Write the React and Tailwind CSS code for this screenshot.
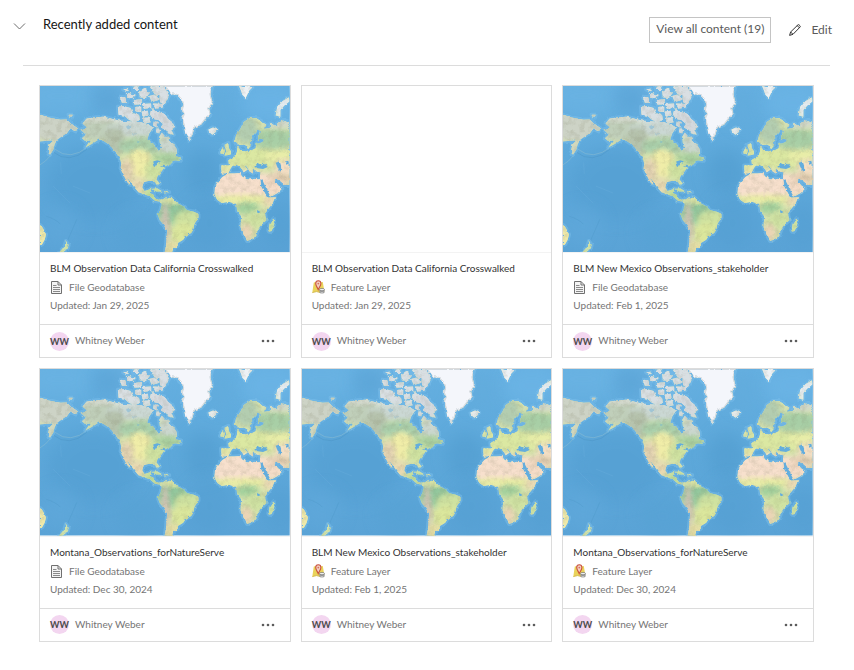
import React, { useState } from 'react';

const ITEMS = [
    { id: 1, title: 'BLM Observation Data California Crosswalked', type: 'File Geodatabase', updated: 'Jan 29, 2025', owner: 'Whitney Weber', hasThumbnail: true },
    { id: 2, title: 'BLM Observation Data California Crosswalked', type: 'Feature Layer', updated: 'Jan 29, 2025', owner: 'Whitney Weber', hasThumbnail: false },
    { id: 3, title: 'BLM New Mexico Observations_stakeholder', type: 'File Geodatabase', updated: 'Feb 1, 2025', owner: 'Whitney Weber', hasThumbnail: true },
    { id: 4, title: 'Montana_Observations_forNatureServe', type: 'File Geodatabase', updated: 'Dec 30, 2024', owner: 'Whitney Weber', hasThumbnail: true },
    { id: 5, title: 'BLM New Mexico Observations_stakeholder', type: 'Feature Layer', updated: 'Feb 1, 2025', owner: 'Whitney Weber', hasThumbnail: true },
    { id: 6, title: 'Montana_Observations_forNatureServe', type: 'Feature Layer', updated: 'Dec 30, 2024', owner: 'Whitney Weber', hasThumbnail: true },
];

const TOTAL = 19;

const NORTH_AMERICA = 'M128 112L140 98L162 94L190 92L215 98L240 104L270 106L300 108L322 114L340 124L328 142L322 160L340 172L352 188L358 196L364 186L360 170L358 152L366 140L384 160L400 172L410 188L412 202L406 210L424 214L420 224L404 222L394 232L376 240L366 254L353 270L350 280L360 292L352 298L342 284L326 284L312 288L307 303L314 314L328 310L334 306L330 320L342 326L346 336L358 340L368 338L364 346L346 344L330 330L312 324L296 318L284 304L270 284L262 274L272 296L262 288L250 264L242 248L244 232L240 218L228 200L216 184L203 172L190 164L176 160L164 168L152 176L136 184L144 172L150 164L134 164L126 156L138 146L130 138L122 130L142 124Z';
const SOUTH_AMERICA = 'M362 344L378 333L398 336L412 350L430 360L442 372L462 376L476 382L476 394L464 412L460 430L454 440L438 448L430 460L414 470L414 478L400 486L396 500L374 500L378 480L380 458L382 432L370 414L360 402L354 386L362 370L366 356Z';
const GREENLAND = 'M374 0L384 12L392 24L410 26L424 40L430 56L426 72L432 84L426 98L432 116L436 140L448 162L458 146L464 124L484 116L498 98L512 84L508 68L518 50L512 24L518 0Z';
const AFRICA = 'M548 272L566 262L584 262L602 260L606 270L622 280L632 276L646 278L662 280L664 300L674 318L684 334L706 333L698 352L684 370L676 384L680 402L664 416L656 428L650 446L640 458L622 464L612 446L602 422L604 390L592 374L590 354L568 346L546 350L532 340L524 324L526 304L532 290Z';
const EURASIA = 'M546 262L544 238L568 238L566 222L582 212L590 202L596 182L602 194L616 196L636 192L652 184L650 174L668 168L674 160L660 158L654 162L656 150L664 136L654 130L642 144L634 160L634 176L624 188L616 176L606 176L592 174L584 166L588 150L602 128L612 108L630 96L648 96L664 104L680 116L676 128L690 126L692 112L706 118L718 108L734 102L750 108L750 296L736 296L722 284L708 276L704 284L716 298L728 306L714 320L692 332L684 320L672 300L660 284L662 258L648 256L640 246L640 262L630 256L620 240L612 236L624 250L612 258L602 240L588 236L574 244L566 260Z';
const SIBERIA = 'M0 84L16 92L33 96L62 101L80 100L90 110L112 126L108 136L90 128L82 140L66 150L52 160L44 174L40 190L30 206L24 194L28 176L40 162L20 164L0 166Z';
const BAFFIN = 'M336 66L348 76L360 80L374 82L384 98L396 108L404 124L394 130L402 146L386 142L378 130L362 124L370 114L356 102L338 98L330 84Z';
const ARCTIC = 'M234 62L250 60L272 66L280 82L262 90L236 86ZM240 32L256 34L262 50L246 50ZM262 20L284 26L282 38L262 36ZM282 42L304 40L306 54L284 56ZM254 90L272 84L284 82L298 88L300 102L286 108L268 102ZM298 16L314 6L330 20L318 36L300 34ZM308 54L334 52L334 66L312 68ZM286 62L304 62L304 78L288 76ZM306 76L324 74L326 88L308 92ZM328 30L350 24L356 42L336 48ZM330 2L370 0L380 14L388 30L374 52L358 48L360 28L344 24ZM342 52L370 54L368 64L346 68ZM306 96L326 94L334 108L314 112ZM342 106L356 108L352 124L340 118ZM350 130L360 132L358 142L350 140ZM380 150L392 156L388 164ZM278 2L296 0L294 12L280 12ZM250 10L264 8L262 16Z';
const ISLANDS = 'M506 130L520 124L532 130L528 138L518 146L508 138ZM598 0L612 4L618 0L638 4L628 14L618 36L608 26L604 14ZM542 192L552 184L556 194L552 204L542 202ZM554 176L566 170L568 186L574 196L572 206L554 208L560 198ZM686 432L690 412L702 396L704 412L696 434L688 436ZM334 308L352 306L368 316L350 316ZM372 314L388 318L376 322ZM0 416L8 424L18 444L14 460L6 474L0 476ZM78 464L86 476L82 488L70 490ZM56 500L70 484L78 490L66 500ZM86 86L98 86L96 94L88 94Z';
const NOVAYA_ZEMLYA = 'M708 88L712 66L728 46L748 34L750 46L734 58L722 72L722 92Z';

const LAND = [NORTH_AMERICA, SOUTH_AMERICA, AFRICA, EURASIA, SIBERIA, BAFFIN, ARCTIC, ISLANDS, GREENLAND, NOVAYA_ZEMLYA].join('');

// cx, cy, rx, ry, color of the soft terrain tints clipped to the land
const TERRAIN = [
    [60, 120, 100, 50, '#cdd3c6'],
    [34, 190, 18, 30, '#d3d8c0'],
    [170, 125, 60, 40, '#c0cfba'],
    [170, 96, 60, 10, '#d8dbd2'],
    [310, 50, 130, 75, '#d9dfe3'],
    [290, 130, 90, 26, '#cbd8d4'],
    [224, 165, 34, 42, '#b6c3ad'],
    [306, 180, 70, 26, '#a9cfab'],
    [392, 180, 40, 28, '#cbd7cf'],
    [380, 220, 50, 20, '#a9d0a0'],
    [300, 232, 38, 44, '#f0eda8'],
    [346, 250, 30, 30, '#cfe2a0'],
    [260, 258, 22, 42, '#e4d3b2'],
    [294, 298, 24, 24, '#e9d9b2'],
    [340, 325, 28, 18, '#bddb9a'],
    [378, 104, 36, 50, '#d4d9de'],
    [404, 378, 60, 34, '#93c79d'],
    [446, 402, 44, 30, '#cfe2a0'],
    [400, 342, 34, 10, '#dde5a4'],
    [434, 444, 40, 34, '#dbe79c'],
    [376, 424, 12, 76, '#d0c2b4'],
    [400, 486, 24, 24, '#e6dfa6'],
    [600, 296, 100, 48, '#f7e0cd'],
    [610, 340, 94, 14, '#e9eda4'],
    [624, 366, 34, 18, '#a2d09c'],
    [650, 400, 34, 26, '#cfe2a2'],
    [620, 438, 18, 26, '#ebd4b6'],
    [690, 344, 20, 16, '#eedbb8'],
    [700, 296, 42, 34, '#f6ddc8'],
    [640, 216, 110, 32, '#dbe8a2'],
    [720, 210, 44, 20, '#e8eda8'],
    [700, 158, 70, 30, '#a8cfa6'],
    [620, 130, 34, 42, '#b3cdb0'],
    [720, 112, 44, 14, '#d2d8cd'],
    [738, 246, 34, 26, '#f5e0c6'],
    [726, 276, 36, 14, '#e2ccb0'],
    [560, 248, 22, 12, '#e6e8a6'],
    [520, 134, 24, 18, '#e8ecee'],
    [618, 14, 30, 34, '#eef2f6'],
    [730, 62, 30, 36, '#e4ebf0'],
    [695, 415, 14, 26, '#cbe0a0'],
    [4, 446, 24, 40, '#efe9aa'],
    [74, 484, 24, 24, '#cfe2a8'],
];

const DEPTHS = [
    [60, 30, 110, 60, '#6ab3e3', 0.7],
    [280, 30, 90, 70, '#6ab1e1', 0.7],
    [205, 40, 50, 44, '#5aa3d5', 0.7],
    [160, 290, 140, 110, '#539ed1', 0.6],
    [490, 260, 56, 70, '#519ccf', 0.6],
    [510, 410, 70, 80, '#539ed1', 0.5],
    [60, 420, 60, 60, '#60a9db', 0.6],
    [690, 50, 90, 60, '#6bb4e5', 0.9],
    [540, 60, 40, 60, '#62abdc', 0.6],
    [720, 420, 50, 70, '#539ed1', 0.5],
    [300, 440, 70, 60, '#57a2d4', 0.6],
];

function WorldMap() {
    return (
        <svg viewBox="0 0 750 498" preserveAspectRatio="none" className="block h-full w-full" aria-hidden="true">
            <defs>
                <clipPath id="land"><path d={LAND} /></clipPath>
                <linearGradient id="ocean" x1="0" y1="0" x2="0" y2="1">
                    <stop offset="0" stopColor="#65afe0" />
                    <stop offset=".5" stopColor="#5da8da" />
                    <stop offset="1" stopColor="#5aa3d6" />
                </linearGradient>
                <filter id="soft" x="-30%" y="-30%" width="160%" height="160%"><feGaussianBlur stdDeviation="8" /></filter>
                <filter id="deep" x="-50%" y="-50%" width="200%" height="200%"><feGaussianBlur stdDeviation="24" /></filter>
                <filter id="coast" x="0" y="0" width="100%" height="100%" colorInterpolationFilters="sRGB">
                    <feTurbulence type="fractalNoise" baseFrequency="0.09" numOctaves="3" seed="4" result="n" />
                    <feDisplacementMap in="SourceGraphic" in2="n" scale="9" xChannelSelector="R" yChannelSelector="G" />
                    <feGaussianBlur stdDeviation="1.2" />
                </filter>
                <filter id="relief" x="0" y="0" width="100%" height="100%" colorInterpolationFilters="sRGB">
                    <feTurbulence type="fractalNoise" baseFrequency="0.06" numOctaves="4" seed="9" />
                    <feColorMatrix values="0 0 0 0 0.5  0 0 0 0 0.5  0 0 0 0 0.4  2.4 0 0 0 -1" />
                </filter>
            </defs>
            <rect width="750" height="498" fill="url(#ocean)" />
            {DEPTHS.map(([cx, cy, rx, ry, fill, opacity], i) => (
                <ellipse key={i} cx={cx} cy={cy} rx={rx} ry={ry} fill={fill} opacity={opacity} filter="url(#deep)" />
            ))}
            <g fill="none" strokeWidth="2" strokeLinecap="round">
                <path d="M144 182Q90 226 46 190M30 210Q18 226 0 236" stroke="#8bbcd2" opacity=".8" />
                <path d="M140 190Q88 236 40 198" stroke="#468cbd" opacity=".5" />
                <path d="M110 400L84 460M20 390Q50 400 60 412" stroke="#4c95c7" opacity=".5" />
                <path d="M62 230L64 262M100 300L150 320M40 300L90 350" stroke="#74b5df" opacity=".35" />
            </g>
            <path d={LAND} fill="none" stroke="#7fc2ee" strokeWidth="12" strokeLinejoin="round" opacity=".45" filter="url(#coast)" />
            <g filter="url(#coast)">
                <rect width="750" height="498" fill="none" />
                <g clipPath="url(#land)">
                    <rect width="750" height="498" fill="#d6e2ae" />
                    {TERRAIN.map(([cx, cy, rx, ry, fill], i) => (
                        <ellipse key={i} cx={cx} cy={cy} rx={rx} ry={ry} fill={fill} filter="url(#soft)" />
                    ))}
                    <rect width="750" height="498" filter="url(#relief)" opacity=".18" />
                    <path d={GREENLAND} fill="#f4f6fb" stroke="#d3d9de" strokeWidth="6" />
                </g>
                {/* inland seas and lakes */}
                <g fill="#63addd">
                    <path d="M644 242L652 230L664 236L674 230L684 242L670 248L654 246Z" />
                    <path d="M708 230L720 226L724 238L728 248L726 258L716 250Z" />
                    <path d="M736 226L746 224L748 232L740 236Z" />
                    <path d="M340 226L352 222L366 226L360 232L352 230L348 242L344 240ZM360 242L374 234L376 240Z" />
                    <path d="M662 278L668 282L684 314L692 330L684 330L666 302Z" />
                    <circle cx="656" cy="376" r="4" />
                    <path d="M258 122L268 116L276 124L264 130ZM272 142L288 142L284 148ZM290 164L300 166L296 170Z" opacity=".4" />
                </g>
            </g>
        </svg>
    );
}

function DocumentIcon() {
    return (
        <svg viewBox="0 0 13 14" className="h-3.5 w-[13px] shrink-0" fill="none" stroke="#707070" aria-hidden="true">
            <path d="M1.5 1.5H8L11.5 5V13.5H1.5Z" fill="#f4f4f4" />
            <path d="M8 1.5V5H11.5" />
            <path d="M3 5.5H6.5M3 7.5H10M3 9.5H10M3 11.5H10" stroke="#8a8a8a" />
        </svg>
    );
}

function FeatureLayerIcon() {
    return (
        <svg viewBox="0 0 13 14" className="h-3.5 w-[13px] shrink-0" aria-hidden="true">
            <path d="M1.8 2.6L4.5 2L8 2.6L10.8 2L12.4 11.5L8.5 12.6L4.5 11.6L0.3 12.6Z" fill="#ead35a" />
            <path d="M0.3 12.6L4.5 11.6L8.5 12.6" stroke="#cdae3a" strokeWidth=".8" fill="none" />
            <path d="M6.2 9.6C5.6 7.6 3.7 6 3.7 3.6A2.6 2.8 0 0 1 8.9 3.6C8.9 6 7 7.6 6.2 9.6Z" fill="#f3cfc2" stroke="#c9523f" strokeWidth="1.1" />
            <circle cx="6.3" cy="3.6" r=".9" fill="#d8715e" />
            <path d="M7.5 9.6V12.2C7.5 13.8 12.5 13.8 12.5 12.2V9.6Z" fill="#8b8b8b" />
            <ellipse cx="10" cy="9.6" rx="2.5" ry="1.2" fill="#f0f0f0" stroke="#777" strokeWidth=".7" />
            <path d="M8.3 12Q10 12.8 11.6 12" stroke="#eee" strokeWidth=".7" fill="none" />
        </svg>
    );
}

function ContentCard({ item }) {
    return (
        <article className="flex min-w-0 flex-col border border-[#dcdcdc] bg-white">
            <div className="aspect-[3/2]">
                {item.hasThumbnail && <WorldMap />}
            </div>
            <div className="border-t border-[#f3f3f3] px-2.5 pt-[7px] pb-2.5 text-[10px] text-[#757575]">
                <h3 className="truncate leading-4 text-[#323232]">{item.title}</h3>
                <p className="mt-0.5 flex items-center gap-1.5 leading-[18px]">
                    {item.type === 'File Geodatabase' ? <DocumentIcon /> : <FeatureLayerIcon />}
                    {item.type}
                </p>
                <p className="leading-[18px]">Updated: {item.updated}</p>
            </div>
            <footer className="flex h-[33px] items-center border-t border-[#dcdcdc] px-2.5">
                <span className="flex size-[19px] items-center justify-center rounded-full bg-[#f3d6f0] text-[9px] font-bold text-[#4a4a4a]">WW</span>
                <span className="ml-1.5 pb-0.5 text-[10px] leading-4 text-[#757575]">{item.owner}</span>
                <button type="button" aria-label={`More options for ${item.title}`} className="ml-auto flex h-6 w-6 cursor-pointer items-center justify-center">
                    <svg viewBox="0 0 14 4" className="h-1 w-3.5" fill="#5c5c5c" aria-hidden="true">
                        <circle cx="2" cy="2" r="1.3" />
                        <circle cx="7" cy="2" r="1.3" />
                        <circle cx="12" cy="2" r="1.3" />
                    </svg>
                </button>
            </footer>
        </article>
    );
}

export default function App() {
    const [open, setOpen] = useState(true);

    return (
        <div className="min-h-screen bg-white font-['Lato','Open_Sans',sans-serif] [font-variant-ligatures:none]">
            {/* Section header */}
            <header className="flex items-start pt-[15px] pr-[22px] pl-3">
                <h2 className="text-[13px] leading-[18px] text-[#151515]">
                    <button type="button" aria-expanded={open} onClick={() => setOpen(!open)} className="flex cursor-pointer items-center gap-4">
                        <svg viewBox="0 0 15 15" className="size-[15px]" fill="none" stroke="#6e6e6e" aria-hidden="true">
                            <path d="M2 6.5L7.5 12L13 6.5" />
                        </svg>
                        Recently added content
                    </button>
                </h2>
                <button type="button" className="mt-0.5 ml-auto h-[26px] cursor-pointer border border-[#c4c4c4] px-1.5 pb-0.5 text-[12px] text-[#5a5a5a]">
                    View all content ({TOTAL})
                </button>
                <button type="button" className="mt-0.5 ml-[18px] flex h-[26px] cursor-pointer items-center gap-2.5 text-[12px] text-[#5a5a5a]">
                    <svg viewBox="0 0 12 12" className="size-3" fill="none" stroke="#333" strokeLinejoin="round" aria-hidden="true">
                        <path d="M.6 11.4L1.6 8L9 .8Q9.6 .4 10.2 1L11 1.8Q11.6 2.4 11.1 3L4 10.3Z" />
                        <path d="M8.2 1.6L10.4 3.8M1.6 8L4 10.3" />
                    </svg>
                    Edit
                </button>
            </header>
            <hr className="mt-[22px] mr-6 ml-[23px] border-[#dcdcdc]" />

            {/* Content cards */}
            {open && (
                <main className="grid grid-cols-3 gap-2.5 pt-[19px] pr-10 pb-[29px] pl-[39px]">
                    {ITEMS.map((item) => <ContentCard key={item.id} item={item} />)}
                </main>
            )}
        </div>
    );
}
